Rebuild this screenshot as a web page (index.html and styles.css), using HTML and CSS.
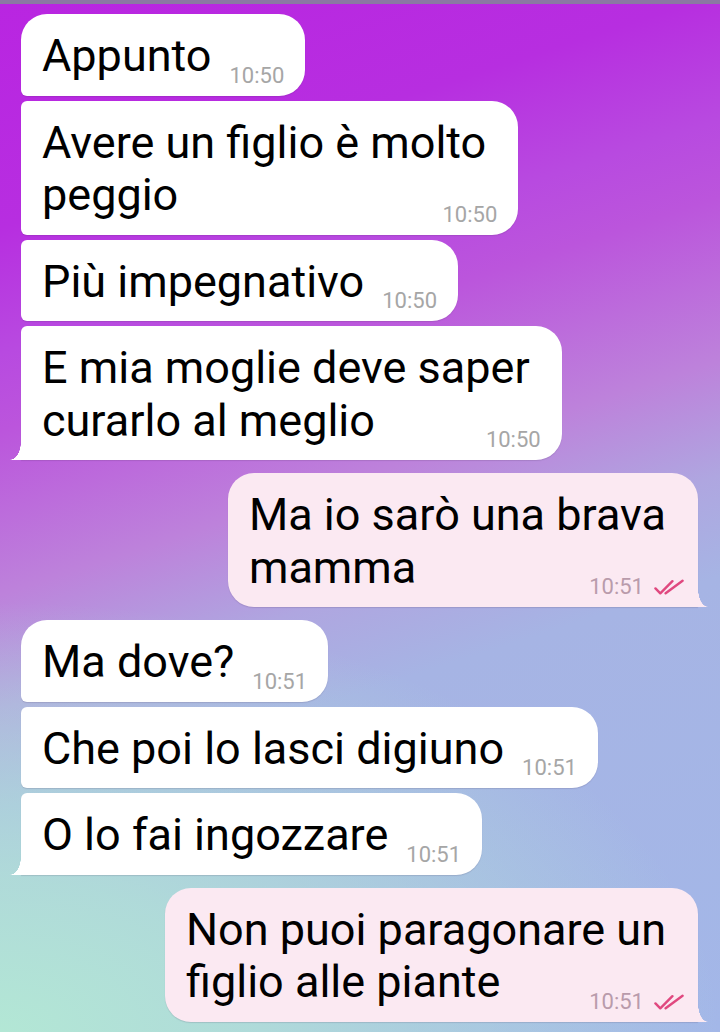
FILE: index.html
```html
<!DOCTYPE html>
<html lang="it">
<head>
    <meta charset="UTF-8">
    <meta name="viewport" content="width=device-width, initial-scale=1.0">
    <title>Chat</title>
    <link rel="stylesheet" href="styles.css">
</head>
<body>
    <div class="topline"></div>
    <div class="chat">
        <div class="msg in first">
            <div class="bubble">
                <div class="row"><span class="text">Appunto</span><span class="meta">10:50</span></div>
            </div>
        </div>
        <div class="msg in">
            <div class="bubble">
                <div class="line">Avere un figlio è molto</div>
                <div class="row"><span class="text">peggio</span><span class="meta">10:50</span></div>
            </div>
        </div>
        <div class="msg in">
            <div class="bubble">
                <div class="row"><span class="text">Più impegnativo</span><span class="meta">10:50</span></div>
            </div>
        </div>
        <div class="msg in last">
            <div class="bubble">
                <div class="line">E mia moglie deve saper</div>
                <div class="row"><span class="text">curarlo al meglio</span><span class="meta">10:50</span></div>
            </div>
        </div>

        <div class="msg out first last">
            <div class="bubble">
                <div class="line">Ma io sarò una brava</div>
                <div class="row">
                    <span class="text">mamma</span>
                    <span class="meta">10:51
                        <svg class="checks" viewBox="0 0 32 16"><path d="M1.5 9.5 L6.5 14.5 L19 2 M12 14.5 L29.5 1.5"/></svg>
                    </span>
                </div>
            </div>
        </div>

        <div class="msg in first">
            <div class="bubble">
                <div class="row"><span class="text">Ma dove?</span><span class="meta">10:51</span></div>
            </div>
        </div>
        <div class="msg in">
            <div class="bubble">
                <div class="row"><span class="text">Che poi lo lasci digiuno</span><span class="meta">10:51</span></div>
            </div>
        </div>
        <div class="msg in last">
            <div class="bubble">
                <div class="row"><span class="text">O lo fai ingozzare</span><span class="meta">10:51</span></div>
            </div>
        </div>

        <div class="msg out first last">
            <div class="bubble">
                <div class="line">Non puoi paragonare un</div>
                <div class="row">
                    <span class="text">figlio alle piante</span>
                    <span class="meta">10:51
                        <svg class="checks" viewBox="0 0 32 16"><path d="M1.5 9.5 L6.5 14.5 L19 2 M12 14.5 L29.5 1.5"/></svg>
                    </span>
                </div>
            </div>
        </div>
    </div>
</body>
</html>
```

FILE: styles.css
```css
body {
    margin: 0;
    height: 1032px;
    overflow: hidden;
    font-family: Roboto, "Noto Sans", sans-serif;
    background-color: #b0a6df;
    background-image:
        radial-gradient(720px 430px at 0 100%, #b3e7d5 0%, rgba(179, 231, 213, 0.75) 35%, rgba(179, 231, 213, 0) 100%),
        linear-gradient(162deg, #b925e1 0%, #b72ee0 18%, #b84ae0 28%, #bb55dc 34%, #bd82db 47%, #afa6e0 56%, #a6b4e4 64%, #a3b7e8 100%);
}

.topline {
    height: 4px;
    background-color: #8b78a3;
}

.chat {
    display: flex;
    flex-direction: column;
    align-items: flex-start;
}

.msg {
    margin-top: 5px;
}

.msg.first {
    margin-top: 13px;
}

.msg:first-child {
    margin-top: 10px;
}

.msg.out {
    align-self: flex-end;
}

.bubble {
    position: relative;
    background-color: #fff;
    color: #000;
    font-size: 45px;
    line-height: 52.5px;
    padding: 16px 21px 13px 21px;
    border-radius: 6px 26px 26px 6px;
    box-shadow: 0 1px 1px rgba(60, 40, 80, 0.15);
}

.in .bubble {
    margin-left: 21px;
}

.in.first .bubble {
    border-top-left-radius: 26px;
}

.in.last .bubble {
    border-bottom-left-radius: 0;
}

/* coda del fumetto */
.in.last .bubble::before {
    content: "";
    position: absolute;
    left: -11px;
    bottom: 0;
    width: 11px;
    height: 18px;
    background: radial-gradient(11px 18px at 0 0, rgba(255, 255, 255, 0) 97%, #fff 100%);
}

.out .bubble {
    margin-right: 22px;
    background-color: #fbe9f2;
    border-radius: 26px 26px 0 26px;
}

.out .bubble::after {
    content: "";
    position: absolute;
    right: -10px;
    bottom: 0;
    width: 10px;
    height: 18px;
    background: radial-gradient(10px 18px at 100% 0, rgba(251, 233, 242, 0) 97%, #fbe9f2 100%);
}

.line {
    padding-right: 11px;
}

.row {
    display: flex;
    justify-content: space-between;
    align-items: flex-end;
    gap: 18px;
}

.meta {
    display: flex;
    align-items: center;
    gap: 10px;
    font-size: 22px;
    line-height: 22px;
    margin-bottom: -4px;
    color: #a6a6a6;
    white-space: nowrap;
}

.out .meta {
    color: #b99bab;
    margin-right: -8px;
}

.checks {
    width: 31px;
    height: 16px;
    fill: none;
    stroke: #e0487f;
    stroke-width: 2.5;
    stroke-linecap: round;
    stroke-linejoin: round;
}
```
